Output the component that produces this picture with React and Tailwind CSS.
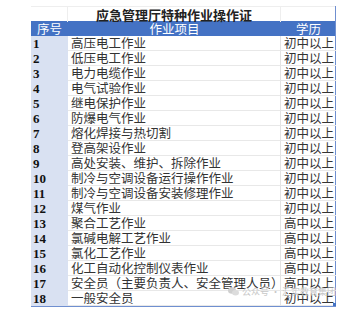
const rows = [
  ['1', '高压电工作业', '初中以上'],
  ['2', '低压电工作业', '初中以上'],
  ['3', '电力电缆作业', '初中以上'],
  ['4', '电气试验作业', '初中以上'],
  ['5', '继电保护作业', '初中以上'],
  ['6', '防爆电气作业', '初中以上'],
  ['7', '熔化焊接与热切割', '初中以上'],
  ['8', '登高架设作业', '初中以上'],
  ['9', '高处安装、维护、拆除作业', '初中以上'],
  ['10', '制冷与空调设备运行操作作业', '初中以上'],
  ['11', '制冷与空调设备安装修理作业', '初中以上'],
  ['12', '煤气作业', '初中以上'],
  ['13', '聚合工艺作业', '高中以上'],
  ['14', '氯碱电解工艺作业', '高中以上'],
  ['15', '氯化工艺作业', '高中以上'],
  ['16', '化工自动化控制仪表作业', '高中以上'],
  ['17', '安全员（主要负责人、安全管理人员）', '高中以上'],
  ['18', '一般安全员', '初中以上'],
]

const cjk = "font-['Noto_Sans_CJK_SC',sans-serif]"

export default function App() {
  return (
    <div className="w-[353px] h-[317px] bg-white relative">
      <div className="absolute left-0 right-0 top-0 h-[6px]" />
      <div className="pt-[6px] pl-[31px]">
        <div className="w-[305px] border-r border-b border-[#6f8fd0]">
          <div className="grid grid-cols-[37px_213px_55px] h-[15px] border-t border-[#eeeeee]">
            <div className="border-r border-[#eeeeee]" />
            <div className={`${cjk} text-[13px] leading-[15px] font-bold text-[#222] text-center border-r border-[#eeeeee]`}>
              应急管理厅特种作业操作证
            </div>
            <div />
          </div>
          <div className={`grid grid-cols-[37px_213px_55px] h-[15px] bg-[#4472c4] text-white text-[12.5px] leading-[15px] ${cjk}`}>
            <div className="text-center">序号</div>
            <div className="text-center">作业项目</div>
            <div className="text-center">学历</div>
          </div>
          {rows.map(([n, name, edu]) => (
            <div key={n} className="grid grid-cols-[37px_213px_55px] h-[15px]">
              <div className="bg-[#d9e1f2] pl-[2px] font-['Liberation_Serif',serif] font-bold text-[13px] leading-[15px] text-[#111]">
                {n}
              </div>
              <div className={`${cjk} pl-[3px] text-[12.5px] leading-[14px] text-[#333] whitespace-nowrap border-b border-[#e8e8e8] border-r border-r-[#e3e3e3]`}>
                {name}
              </div>
              <div className={`${cjk} text-[12.5px] leading-[14px] text-[#333] whitespace-nowrap text-right pr-[2px] border-b border-[#e8e8e8]`}>
                {edu}
              </div>
            </div>
          ))}
        </div>
      </div>
      <div className={`absolute left-[228px] top-[285px] flex items-center gap-[3px] text-[9px] text-[#c8c8c8] ${cjk}`}>
        <svg width="11" height="9" viewBox="0 0 22 18" fill="#cfcfcf">
          <ellipse cx="8" cy="7" rx="8" ry="6.5" />
          <ellipse cx="15" cy="11.5" rx="7" ry="5.5" fill="#dcdcdc" />
        </svg>
        <span>公众号 · 汇实教育集团</span>
      </div>
      <div className="absolute left-[333px] top-[303px] w-[3px] h-[3px] bg-[#4472c4]" />
    </div>
  )
}
